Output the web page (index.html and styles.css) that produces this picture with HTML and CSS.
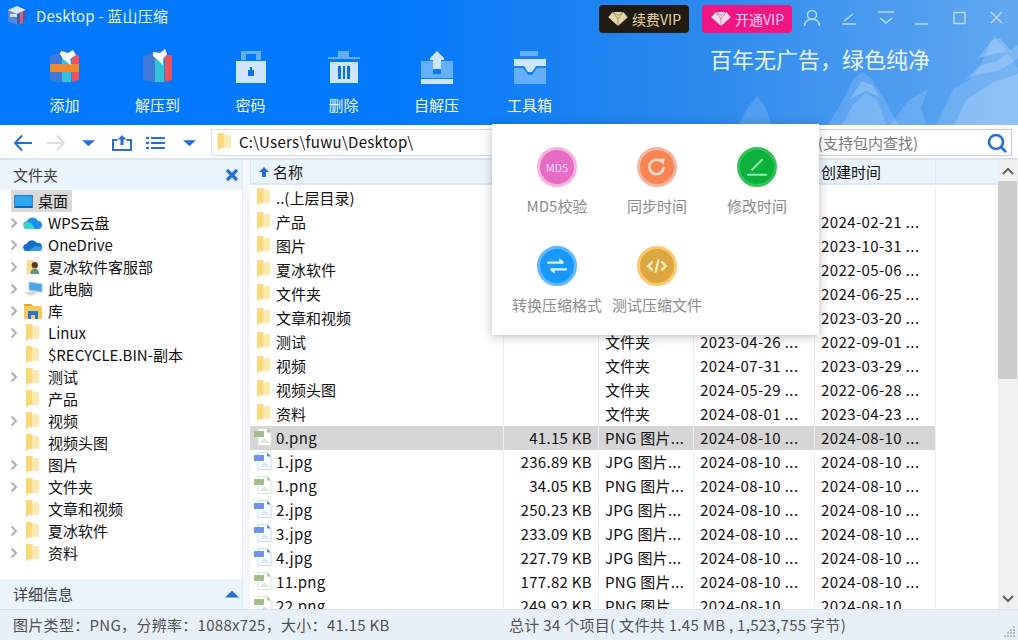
FILE: index.html
```html
<!DOCTYPE html>
<html lang="zh-CN">
<head>
<meta charset="utf-8">
<title>Desktop - 蓝山压缩</title>
<link rel="stylesheet" href="styles.css">
</head>
<body>
<svg class="defs" width="0" height="0" aria-hidden="true">
  <defs>
    <symbol id="folder" viewBox="0 0 13 18">
      <path d="M0 0h6l1 2h6v13H3l-3 3z" fill="#fbd778"/>
      <path d="M6 0l1 2h6v13H6z" fill="#fde8ae"/>
    </symbol>
    <symbol id="png" viewBox="0 0 18 18">
      <path d="M4 .5h9l4 4v13H4z" fill="#fff" stroke="#d5e2cc"/>
      <path d="M13 .5l4 4h-4z" fill="#a9c596"/>
      <path d="M6 15l4-5 3 2 3 3z" fill="#dcebd6"/>
      <rect x="0" y="3" width="10" height="6" fill="#9fbf8d"/>
    </symbol>
    <symbol id="jpg" viewBox="0 0 18 18">
      <path d="M4 .5h9l4 4v13H4z" fill="#fff" stroke="#c7d9f4"/>
      <path d="M13 .5l4 4h-4z" fill="#5f8fdc"/>
      <path d="M6 15l4-5 3 2 3 3z" fill="#d8e6f8"/>
      <rect x="0" y="3" width="10" height="6" fill="#6b97e0"/>
    </symbol>
    <symbol id="chev" viewBox="0 0 8 12">
      <path d="M1.500 1.500L6 6l-4.500 4.500" fill="none" stroke="#b0b0b0" stroke-width="2"/>
    </symbol>
    <symbol id="caret" viewBox="0 0 14 8">
      <path d="M0 1h14L7 7.500z" fill="#2470d8"/>
    </symbol>
    <symbol id="gem" viewBox="0 0 24 18">
      <path d="M6 1h12l5 6-11 10L1 7z" fill="currentColor"/>
      <path d="M6 1l6 8 6-8-6 4zM12 9v8" fill="none" stroke="#000" stroke-opacity=".35"/>
    </symbol>
  </defs>
</svg>

<div class="app">
  <header class="head">
    <svg class="peaks" viewBox="0 0 318 92" width="318" height="92" aria-hidden="true">
      <g fill="#fff">
        <path d="M38 92l10-18 9-11 8 10 7 19z" opacity=".14"/>
        <path d="M128 92l14-23 12-24 8-6 9 6 13 20 14 27z" opacity=".14"/>
        <path d="M142 92l11-20 13-12 12 8 8 24z" opacity=".16"/>
        <path d="M150 66l12-18 10 4 8 12-14-6z" opacity=".22"/>
        <path d="M190 92l18-24 20-12-7 20 6 16z" opacity=".14"/>
        <path d="M236 92l18-37 16-8 10-14 14-30 10 12 14 20v57z" opacity=".14"/>
        <path d="M254 92l12-25 28-18 24-8v51z" opacity=".18"/>
        <path d="M265 47l14-14 18-5 21-16v14l-20 12-22 4z" opacity=".18"/>
        <path d="M278 25l14-18 8-2 12 14-14 1z" opacity=".2"/>
      </g>
    </svg>

    <div class="titlebar">
      <div class="brand">
        <svg class="logo" viewBox="0 0 20 20" aria-hidden="true">
          <path d="M1 5l9-4 9 4v11l-9 4-9-4z" fill="#5a86dc"/>
          <path d="M1 5l9-4 9 4-9 4z" fill="#d8e8ff"/>
          <path d="M10 9l9-4v11l-9 4z" fill="#3a5fb8"/>
          <path d="M13 7.500l3-1.300V18l-3 1.300z" fill="#e05a78"/>
          <path d="M3 9h7v3H3z" fill="#d0e2ff"/>
        </svg>
        <span class="title">Desktop - 蓝山压缩</span>
      </div>
      <div class="winbar">
        <a class="vip vip-dark"><svg class="gem" aria-hidden="true"><use href="#gem"/></svg>续费VIP</a>
        <a class="vip vip-pink"><svg class="gem" aria-hidden="true"><use href="#gem"/></svg>开通VIP</a>
        <div class="winbtns">
          <svg class="wi" viewBox="0 0 18 18" aria-hidden="true"><circle cx="9" cy="6" r="4.500"/><path d="M1.500 17c.5-4.500 3.500-7 7.500-7s7 2.500 7.500 7"/></svg>
          <svg class="wi" viewBox="0 0 18 18" aria-hidden="true"><path d="M2 15h14M4 12l9-7"/></svg>
          <svg class="wi" viewBox="0 0 18 18" aria-hidden="true"><path d="M1 3h16M3 9l6 5 6-5"/></svg>
          <svg class="wi" viewBox="0 0 18 18" aria-hidden="true"><path d="M1 15h13"/></svg>
          <svg class="wi" viewBox="0 0 18 18" aria-hidden="true"><rect x="3" y="3.500" width="11" height="11"/></svg>
          <svg class="wi" viewBox="0 0 18 18" aria-hidden="true"><path d="M3 3l11 11M14 3L3 14"/></svg>
        </div>
      </div>
    </div>

    <div class="ribbon">
      <nav class="tools">
        <a class="tool">
          <svg class="ticon" viewBox="0 0 36 36" aria-hidden="true">
            <path d="M3 8l15-5 14 5v24l-14 3-15-3z" fill="#3f78d8"/>
            <path d="M15 8h9v26l-9 0z" fill="#2fc4dc"/>
            <path d="M25 7h7v25l-7 2z" fill="#f2505a"/>
            <path d="M3 16h29v8H3z" fill="#ee8a32"/>
            <path d="M14 3l7 2 5-3 3 5-6 4 1 6-7-5-4-6z" fill="#fff"/>
          </svg>
          <span>添加</span>
        </a>
        <a class="tool">
          <svg class="ticon" viewBox="0 0 36 36" aria-hidden="true">
            <path d="M3 8l15-5 14 5v24l-14 3-15-3z" fill="#3f78d8"/>
            <path d="M15 8h9v26l-9 0z" fill="#2fc4dc"/>
            <path d="M25 7h7v25l-7 2z" fill="#f2505a"/>
            <path d="M13 4l7 1 5-4 2 5-4 5v6l-5-5-5-4z" fill="#fff"/>
          </svg>
          <span>解压到</span>
        </a>
        <a class="tool">
          <svg class="ticon" viewBox="0 0 36 36" aria-hidden="true">
            <path d="M8 12V3h20v9h-5V6H13v6z" fill="#66aeff"/>
            <path d="M3 13h30v22H3z" fill="#cfe4ff"/>
            <path d="M17 19h2v3h2v6h-6v-6h2z" fill="#0a70ea"/>
          </svg>
          <span>密码</span>
        </a>
        <a class="tool">
          <svg class="ticon" viewBox="0 0 36 36" aria-hidden="true">
            <path d="M12 3h11v6H12z" fill="#66aeff"/>
            <path d="M2 9h32v2H2z" fill="#66aeff"/>
            <path d="M4 14h28v21H4z" fill="#cfe4ff"/>
            <path d="M12 18h3v13h-3zM17 18h2v13h-2zM21 18h3v13h-3z" fill="#0a70ea"/>
          </svg>
          <span>删除</span>
        </a>
        <a class="tool">
          <svg class="ticon" viewBox="0 0 36 36" aria-hidden="true">
            <path d="M2 13h12v13h8V13h12v17H2z" fill="#66aeff"/>
            <path d="M2 31h32v5H2z" fill="#cfe4ff"/>
            <path d="M18 3l7 7v2h-3v9h-8v-9h-3v-2z" fill="#cfe4ff"/>
          </svg>
          <span>自解压</span>
        </a>
        <a class="tool">
          <svg class="ticon" viewBox="0 0 36 36" aria-hidden="true">
            <path d="M8 3h18v5H8z" fill="#66aeff"/>
            <path d="M2 11h32v7H2z" fill="#cfe4ff"/>
            <path d="M2 20h9l5 7h4l5-7h9v16H2z" fill="#66aeff"/>
            <path d="M12 18h12l-4 6h-4z" fill="#cfe4ff"/>
          </svg>
          <span>工具箱</span>
        </a>
      </nav>
      <p class="slogan">百年无广告，绿色纯净</p>
    </div>
  </header>

  <div class="navbar">
    <div class="navbtns">
      <svg class="nv nv-back" viewBox="0 0 20 18" aria-hidden="true"><path d="M19 9H2M9 1.500L2 9l7 7.500" fill="none" stroke="#2470d8" stroke-width="2"/></svg>
      <svg class="nv nv-fwd" viewBox="0 0 20 18" aria-hidden="true"><path d="M1 9h17M11 1.500L18 9l-7 7.500" fill="none" stroke="#dcdcdc" stroke-width="2"/></svg>
      <svg class="nv nv-caret" viewBox="0 0 14 8" aria-hidden="true"><use href="#caret"/></svg>
      <svg class="nv nv-up" viewBox="0 0 20 16" aria-hidden="true"><path d="M5.500 5H1v10h18V5h-4.500" fill="none" stroke="#2470d8" stroke-width="2"/><path d="M10 0l4.500 4.500H11.500V10h-3V4.500H5.500z" fill="#2470d8"/></svg>
      <svg class="nv nv-list" viewBox="0 0 19 14" aria-hidden="true"><path d="M0 1h3v2H0zM5 1h14v2H5zM0 6h3v2H0zM5 6h14v2H5zM0 11h3v2H0zM5 11h14v2H5z" fill="#2470d8"/></svg>
      <svg class="nv nv-caret2" viewBox="0 0 14 8" aria-hidden="true"><use href="#caret"/></svg>
    </div>
    <div class="addr">
      <svg class="addr-ic" aria-hidden="true"><use href="#folder"/></svg>
      <span>C:\Users\fuwu\Desktop\</span>
    </div>
    <div class="search">
      <span class="search-ph">(支持包内查找)</span>
      <svg class="search-ic" viewBox="0 0 20 20" aria-hidden="true"><circle cx="9" cy="9" r="7" fill="none" stroke="#2470d8" stroke-width="2.600"/><path d="M14 14l5 5" stroke="#2470d8" stroke-width="2.600"/></svg>
    </div>
  </div>

  <main class="main">
    <aside class="side">
      <div class="side-head"><span>文件夹</span>
        <svg class="side-x" viewBox="0 0 14 14" aria-hidden="true"><path d="M2 2l10 10M12 2L2 12" stroke="#2470d8" stroke-width="3.200"/></svg>
      </div>
      <ul class="tree">
        <li class="node node-desk"><span class="desk">
          <svg class="t-ic-desk" viewBox="0 0 20 14" aria-hidden="true"><rect x=".5" y=".5" width="19" height="13" fill="#2fa8f4" stroke="#1a6fbe"/><path d="M1 12h18v1.500H1z" fill="#145a9c"/></svg>桌面</span></li>
        <li class="node"><svg class="chev"><use href="#chev"/></svg>
          <svg class="t-ic" viewBox="0 0 20 14" aria-hidden="true"><path d="M5 13a4 4 0 0 1-1-8 6 6 0 0 1 11 0 4 4 0 0 1 0 8z" fill="#1a8ee8"/><path d="M5 13a4 4 0 0 1-1-8l5 3 3 5z" fill="#38d0d0"/></svg>WPS云盘</li>
        <li class="node"><svg class="chev"><use href="#chev"/></svg>
          <svg class="t-ic" viewBox="0 0 20 14" aria-hidden="true"><path d="M4 13a3.500 3.500 0 0 1-.5-7A6 6 0 0 1 14 5a4 4 0 0 1 2 8z" fill="#0f6fc6"/><path d="M6 13l6-5 7 1a3 3 0 0 1-3 4z" fill="#2e9ee6"/></svg>OneDrive</li>
        <li class="node"><svg class="chev"><use href="#chev"/></svg>
          <svg class="t-ic" viewBox="0 0 20 18" aria-hidden="true"><path d="M3 1h8v15H5l-2 2z" fill="#fbdc8c"/><circle cx="12" cy="7" r="3.500" fill="#5a3a20"/><path d="M7 17c0-4 2-6 5-6s5 2 5 6z" fill="#5a9a78"/></svg>夏冰软件客服部</li>
        <li class="node"><svg class="chev"><use href="#chev"/></svg>
          <svg class="t-ic" viewBox="0 0 20 16" aria-hidden="true"><path d="M6 1l13 2v8L6 9z" fill="#46a6ea" stroke="#9cc4e4"/><path d="M1 12l8-2 6 2-8 3z" fill="#d4d8dc"/></svg>此电脑</li>
        <li class="node"><svg class="chev"><use href="#chev"/></svg>
          <svg class="t-ic" viewBox="0 0 20 16" aria-hidden="true"><path d="M1 1h7l2 2h9v13H1z" fill="#fbc95e"/><path d="M1 1h7l2 2H1z" fill="#e8a020"/><path d="M5 8h10v8h-3v-4H8v4H5z" fill="#1e78d4"/></svg>库</li>
        <li class="node"><svg class="chev"><use href="#chev"/></svg><svg class="t-fd"><use href="#folder"/></svg>Linux</li>
        <li class="node"><i class="nochev"></i><svg class="t-fd"><use href="#folder"/></svg>$RECYCLE.BIN-副本</li>
        <li class="node"><svg class="chev"><use href="#chev"/></svg><svg class="t-fd"><use href="#folder"/></svg>测试</li>
        <li class="node"><i class="nochev"></i><svg class="t-fd"><use href="#folder"/></svg>产品</li>
        <li class="node"><svg class="chev"><use href="#chev"/></svg><svg class="t-fd"><use href="#folder"/></svg>视频</li>
        <li class="node"><i class="nochev"></i><svg class="t-fd"><use href="#folder"/></svg>视频头图</li>
        <li class="node"><svg class="chev"><use href="#chev"/></svg><svg class="t-fd"><use href="#folder"/></svg>图片</li>
        <li class="node"><svg class="chev"><use href="#chev"/></svg><svg class="t-fd"><use href="#folder"/></svg>文件夹</li>
        <li class="node"><i class="nochev"></i><svg class="t-fd"><use href="#folder"/></svg>文章和视频</li>
        <li class="node"><svg class="chev"><use href="#chev"/></svg><svg class="t-fd"><use href="#folder"/></svg>夏冰软件</li>
        <li class="node"><svg class="chev"><use href="#chev"/></svg><svg class="t-fd"><use href="#folder"/></svg>资料</li>
      </ul>
      <div class="side-foot"><span>详细信息</span>
        <svg class="foot-caret" viewBox="0 0 14 8" aria-hidden="true"><path d="M0 7.500h14L7 .5z" fill="#2470d8"/></svg>
      </div>
    </aside>

    <section class="list">
      <div class="cols">
        <div class="row row-head">
          <div class="cell c-name"><svg class="sort" viewBox="0 0 10 10" aria-hidden="true"><path d="M5 0l5 5H7v5H3V5H0z" fill="#2470d8"/></svg>名称</div>
          <div class="cell"></div><div class="cell"></div><div class="cell"></div>
          <div class="cell c-date">创建时间</div><div class="cell"></div>
        </div>
        <div class="rows">
          <div class="row"><div class="cell c-name"><svg class="f-ic"><use href="#folder"/></svg>..(上层目录)</div><div class="cell"></div><div class="cell"></div><div class="cell"></div><div class="cell c-date"></div><div class="cell"></div></div>
          <div class="row"><div class="cell c-name"><svg class="f-ic"><use href="#folder"/></svg>产品</div><div class="cell"></div><div class="cell"></div><div class="cell c-date"></div><div class="cell c-date">2024-02-21 ...</div><div class="cell"></div></div>
          <div class="row"><div class="cell c-name"><svg class="f-ic"><use href="#folder"/></svg>图片</div><div class="cell"></div><div class="cell"></div><div class="cell c-date"></div><div class="cell c-date">2023-10-31 ...</div><div class="cell"></div></div>
          <div class="row"><div class="cell c-name"><svg class="f-ic"><use href="#folder"/></svg>夏冰软件</div><div class="cell"></div><div class="cell"></div><div class="cell c-date"></div><div class="cell c-date">2022-05-06 ...</div><div class="cell"></div></div>
          <div class="row"><div class="cell c-name"><svg class="f-ic"><use href="#folder"/></svg>文件夹</div><div class="cell"></div><div class="cell"></div><div class="cell c-date"></div><div class="cell c-date">2024-06-25 ...</div><div class="cell"></div></div>
          <div class="row"><div class="cell c-name"><svg class="f-ic"><use href="#folder"/></svg>文章和视频</div><div class="cell"></div><div class="cell"></div><div class="cell c-date"></div><div class="cell c-date">2023-03-20 ...</div><div class="cell"></div></div>
          <div class="row"><div class="cell c-name"><svg class="f-ic"><use href="#folder"/></svg>测试</div><div class="cell"></div><div class="cell c-type">文件夹</div><div class="cell c-date">2023-04-26 ...</div><div class="cell c-date">2022-09-01 ...</div><div class="cell"></div></div>
          <div class="row"><div class="cell c-name"><svg class="f-ic"><use href="#folder"/></svg>视频</div><div class="cell"></div><div class="cell c-type">文件夹</div><div class="cell c-date">2024-07-31 ...</div><div class="cell c-date">2023-03-29 ...</div><div class="cell"></div></div>
          <div class="row"><div class="cell c-name"><svg class="f-ic"><use href="#folder"/></svg>视频头图</div><div class="cell"></div><div class="cell c-type">文件夹</div><div class="cell c-date">2024-05-29 ...</div><div class="cell c-date">2022-06-28 ...</div><div class="cell"></div></div>
          <div class="row"><div class="cell c-name"><svg class="f-ic"><use href="#folder"/></svg>资料</div><div class="cell"></div><div class="cell c-type">文件夹</div><div class="cell c-date">2024-08-01 ...</div><div class="cell c-date">2023-04-23 ...</div><div class="cell"></div></div>
          <div class="row row-file row-sel"><div class="cell c-name"><svg class="f-img"><use href="#png"/></svg>0.png</div><div class="cell c-size">41.15 KB</div><div class="cell c-type">PNG 图片...</div><div class="cell c-date">2024-08-10 ...</div><div class="cell c-date">2024-08-10 ...</div><div class="cell"></div></div>
          <div class="row row-file"><div class="cell c-name"><svg class="f-img"><use href="#jpg"/></svg>1.jpg</div><div class="cell c-size">236.89 KB</div><div class="cell c-type">JPG 图片...</div><div class="cell c-date">2024-08-10 ...</div><div class="cell c-date">2024-08-10 ...</div><div class="cell"></div></div>
          <div class="row row-file"><div class="cell c-name"><svg class="f-img"><use href="#png"/></svg>1.png</div><div class="cell c-size">34.05 KB</div><div class="cell c-type">PNG 图片...</div><div class="cell c-date">2024-08-10 ...</div><div class="cell c-date">2024-08-10 ...</div><div class="cell"></div></div>
          <div class="row row-file"><div class="cell c-name"><svg class="f-img"><use href="#jpg"/></svg>2.jpg</div><div class="cell c-size">250.23 KB</div><div class="cell c-type">JPG 图片...</div><div class="cell c-date">2024-08-10 ...</div><div class="cell c-date">2024-08-10 ...</div><div class="cell"></div></div>
          <div class="row row-file"><div class="cell c-name"><svg class="f-img"><use href="#jpg"/></svg>3.jpg</div><div class="cell c-size">233.09 KB</div><div class="cell c-type">JPG 图片...</div><div class="cell c-date">2024-08-10 ...</div><div class="cell c-date">2024-08-10 ...</div><div class="cell"></div></div>
          <div class="row row-file"><div class="cell c-name"><svg class="f-img"><use href="#jpg"/></svg>4.jpg</div><div class="cell c-size">227.79 KB</div><div class="cell c-type">JPG 图片...</div><div class="cell c-date">2024-08-10 ...</div><div class="cell c-date">2024-08-10 ...</div><div class="cell"></div></div>
          <div class="row row-file"><div class="cell c-name"><svg class="f-img"><use href="#png"/></svg>11.png</div><div class="cell c-size">177.82 KB</div><div class="cell c-type">PNG 图片...</div><div class="cell c-date">2024-08-10 ...</div><div class="cell c-date">2024-08-10 ...</div><div class="cell"></div></div>
          <div class="row row-file"><div class="cell c-name"><svg class="f-img"><use href="#png"/></svg>22.png</div><div class="cell c-size">249.92 KB</div><div class="cell c-type">PNG 图片...</div><div class="cell c-date">2024-08-10 ...</div><div class="cell c-date">2024-08-10 ...</div><div class="cell"></div></div>
        </div>
      </div>
      <div class="vscroll">
        <svg class="sb-arrow" viewBox="0 0 12 8" aria-hidden="true"><path d="M1 7l5-5 5 5" fill="none" stroke="#606060" stroke-width="2"/></svg>
        <div class="sb-thumb"></div>
        <div class="sb-track"></div>
        <svg class="sb-arrow" viewBox="0 0 12 8" aria-hidden="true"><path d="M1 1l5 5 5-5" fill="none" stroke="#606060" stroke-width="2"/></svg>
      </div>
    </section>
  </main>

  <footer class="status">
    <span class="st-left">图片类型：PNG，分辨率：1088x725，大小：41.15 KB</span>
    <span class="st-right">总计 34 个项目( 文件共 1.45 MB , 1,523,755 字节)</span>
    <svg class="grip" viewBox="0 0 12 12" aria-hidden="true"><path d="M9 1h2v2H9zM6 4h2v2H6zM9 4h2v2H9zM3 7h2v2H3zM6 7h2v2H6zM9 7h2v2H9zM0 10h2v2H0zM3 10h2v2H3zM6 10h2v2H6zM9 10h2v2H9z" fill="#b8bec4"/></svg>
  </footer>

  <div class="popup">
    <a class="pop-item"><span class="disc d-md5">MD5</span><span>MD5校验</span></a>
    <a class="pop-item"><span class="disc d-sync"><svg viewBox="0 0 20 20" aria-hidden="true"><path d="M16 10a6.500 6.500 0 1 1-3-5.500" fill="none" stroke="#ffe2d6" stroke-width="2.200"/><path d="M11 3l6-1-1 6z" fill="#ffe2d6"/></svg></span><span>同步时间</span></a>
    <a class="pop-item"><span class="disc d-edit"><svg viewBox="0 0 20 20" aria-hidden="true"><path d="M1 17h18M5 13L15 3" fill="none" stroke="#8df2a8" stroke-width="1.800"/></svg></span><span>修改时间</span></a>
    <a class="pop-item"><span class="disc d-conv"><svg viewBox="0 0 20 20" aria-hidden="true"><path d="M1 8h15V6l-4-3v3H1zM19 12H4v2l4 3v-3h11z" fill="#d8eeff"/></svg></span><span>转换压缩格式</span></a>
    <a class="pop-item"><span class="disc d-code"><svg viewBox="0 0 20 20" aria-hidden="true"><path d="M6 6l-4 4 4 4M14 6l4 4-4 4M11.500 4l-3 12" fill="none" stroke="#fff0c4" stroke-width="2"/></svg></span><span>测试压缩文件</span></a>
  </div>
</div>
</body>
</html>
```
FILE: styles.css
```css
* { box-sizing: border-box; }
html, body { margin: 0; height: 100%; overflow: hidden; }
body {
  font: 15px/1.2 "Noto Sans CJK SC", "Open Sans", sans-serif;
  color: #101010;
  background: #fff;
}
.defs { position: absolute; }
.app { position: relative; width: 1018px; height: 640px; display: flex; flex-direction: column; overflow: hidden; }

/* header */
.head {
  position: relative;
  height: 125px;
  flex: none;
  color: #fff;
  background: linear-gradient(90deg, #0079fa 0%, #0079fa 38%, #2a88ee 68%, #62a8f0 100%);
}
.peaks { position: absolute; right: 0; bottom: 0; }
.titlebar { position: relative; display: flex; justify-content: space-between; height: 38px; padding: 5px 0 0 7px; }
.brand { display: flex; align-items: flex-start; gap: 9px; }
.logo { width: 20px; height: 20px; }
.title { line-height: 21px; color: #eaf4ff; letter-spacing: .2px; }
.winbar { display: flex; align-items: flex-start; }
.vip {
  display: flex; align-items: center; justify-content: center; gap: 3px;
  width: 90px; height: 28px; border-radius: 4px; font-size: 14px;
}
.vip-dark { background: #1f1a12; color: #e8d6a4; margin-right: 13px; }
.vip-pink { background: #f01585; color: #ffd8ec; }
.gem { width: 22px; height: 16px; }
.winbtns { display: flex; gap: 19px; padding: 4px 12px 0 11px; }
.wi { width: 18px; height: 18px; fill: none; stroke: #bcd8f8; stroke-width: 1.500; }
.ribbon { position: relative; display: flex; justify-content: space-between; }
.tools { display: flex; padding-left: 18px; }
.tool { width: 93px; display: flex; flex-direction: column; align-items: center; gap: 11px; padding-top: 10px; color: #f0f7ff; line-height: 20px; }
.ticon { width: 36px; height: 36px; }
.slogan { margin: 5px 88px 0 0; font-size: 22px; line-height: 30px; color: #eaf4ff; font-weight: 400; }

/* nav */
.navbar { height: 35px; flex: none; display: flex; align-items: center; background: #fff; border-bottom: 2px solid #dbe3ec; padding: 2px 6px 0 0; position: relative; }
.navbtns { width: 211px; height: 20px; display: flex; align-items: center; flex: none; }
.nv { height: 18px; flex: none; }
.nv-back { width: 20px; margin-left: 13px; }
.nv-fwd { width: 20px; margin-left: 13px; }
.nv-caret { width: 13px; height: 8px; margin-left: 16px; }
.nv-up { width: 20px; height: 16px; margin-left: 17px; }
.nv-list { width: 19px; height: 14px; margin-left: 14px; }
.nv-caret2 { width: 13px; height: 8px; margin-left: 18px; }
.addr { width: 480px; height: 27px; display: flex; align-items: center; gap: 8px; padding: 0 0 1px 5px; border: 1px solid #d6dfea; flex: none; letter-spacing: .3px; }
.addr-ic { width: 14px; height: 18px; }
.search { flex: 1; height: 27px; display: flex; align-items: center; justify-content: flex-end; gap: 69px; padding-right: 4px; border: 1px solid #cfcfcf; border-left: 0; color: #7c7c7c; }
.search-ic { width: 20px; height: 20px; }

/* main */
.main { flex: 1; min-height: 0; display: flex; }
.side { width: 250px; flex: none; display: flex; flex-direction: column; border-right: 7px solid #f4f8fc; box-shadow: inset -1px 0 0 #e8eef5; padding-right: 1px; }
.side-head { height: 30px; flex: none; display: flex; align-items: center; justify-content: space-between; padding: 0 3px 0 13px; background: #eaf4fd; color: #404040; }
.side-x { width: 14px; height: 14px; }
.tree { list-style: none; margin: 0; padding: 0; flex: 1; min-height: 0; overflow: hidden; }
.node { height: 22px; display: flex; align-items: center; padding-left: 10px; white-space: nowrap; }
.chev { width: 8px; height: 12px; flex: none; margin-right: 5px; }
.nochev { width: 8px; margin-right: 5px; flex: none; }
.t-ic { width: 20px; height: 16px; flex: none; margin: 0 5px 0 0; }
.t-fd { width: 13px; height: 18px; flex: none; margin: 0 9px 0 3px; }
.node-desk { padding-left: 11px; }
.desk { display: flex; align-items: center; gap: 5px; width: 61px; height: 22px; padding-left: 3px; background: #d9d9d9; }
.t-ic-desk { width: 19px; height: 13px; }
.side-foot { height: 30px; flex: none; display: flex; align-items: center; justify-content: space-between; padding: 0 3px 0 13px; background: #eaf4fd; color: #404040; }
.foot-caret { width: 14px; height: 8px; }

.list { flex: 1; min-width: 0; display: flex; }
.cols { flex: 1; min-width: 0; display: flex; flex-direction: column; }
.rows { flex: 1; min-height: 0; overflow: hidden; padding-top: 1px; }
.row { display: grid; grid-template-columns: 253px 95px 95px 121px 121px 1fr; height: 24px; line-height: 23px; white-space: nowrap; }
.row-head { height: 25px; background: #eaf4fd; border-bottom: 2px solid #dbe7f3; box-shadow: inset 1px 0 0 #dbe7f3; }
.row-sel { background: linear-gradient(#d6d6d6, #d6d6d6) 0 0 / 686px 100% no-repeat; }
.cell { padding: 0 7px 0 6px; overflow: hidden; border-left: 1px solid #e8f0fa; }
.row-head .cell { border-left-color: #dbe7f3; }
.c-name { display: flex; align-items: center; padding: 0 0 2px 7px; border-left: 0; }
.row-head .c-name { padding: 0 0 0 9px; border-left: 0; }
.sort { width: 10px; height: 10px; margin-right: 4px; }
.f-ic { width: 13px; height: 18px; flex: none; margin-right: 6px; }
.f-img { width: 18px; height: 18px; flex: none; margin: 0 4px 0 -3px; }
.c-size { text-align: right; padding-right: 6px; }
.c-date { letter-spacing: .4px; }
.row-head .c-date { letter-spacing: 0; }
.c-size, .row-file .cell { letter-spacing: .3px; }
.row-file .c-date { letter-spacing: .4px; }
.vscroll { width: 20px; flex: none; display: flex; flex-direction: column; align-items: center; background: #f0f0f0; }
.sb-arrow { width: 12px; height: 8px; margin: 7px 0 6px; flex: none; }
.sb-thumb { width: 19px; height: 198px; background: #cdcdcd; flex: none; align-self: flex-start; }
.sb-track { flex: 1; }

/* status */
.status { height: 31px; flex: none; display: flex; align-items: center; position: relative; background: #e8f0f7; border-top: 1px solid #dbe3ec; color: #505050; padding-left: 13px; letter-spacing: .3px; }
.st-left { width: 496px; flex: none; }
.grip { position: absolute; right: 2px; bottom: 3px; width: 12px; height: 12px; }

/* tool popup */
.popup {
  position: absolute; left: 492px; top: 124px; width: 327px; height: 211px;
  background: #fff; box-shadow: 0 2px 10px rgba(0, 0, 0, .25);
  display: grid; grid-template-columns: repeat(3, 100px); grid-auto-rows: 99px;
  padding: 23px 15px 0 15px; justify-content: start;
}
.pop-item { display: flex; flex-direction: column; align-items: center; gap: 8px; color: #8c8c8c; line-height: 22px; white-space: nowrap; }
.disc { width: 40px; height: 40px; border-radius: 50%; border: 3px solid; display: flex; align-items: center; justify-content: center; flex: none; }
.disc svg { width: 22px; height: 22px; }
.d-md5 { background: #e46cc4; border-color: #fbb0e4; color: #ffd8f2; font-size: 11px; }
.d-sync { background: #f88454; border-color: #f4b4a0; }
.d-edit { background: #0cb03c; border-color: #30c458; }
.d-conv { background: #1898fc; border-color: #5cb8ff; }
.d-code { background: #dca640; border-color: #fcc868; }
```
